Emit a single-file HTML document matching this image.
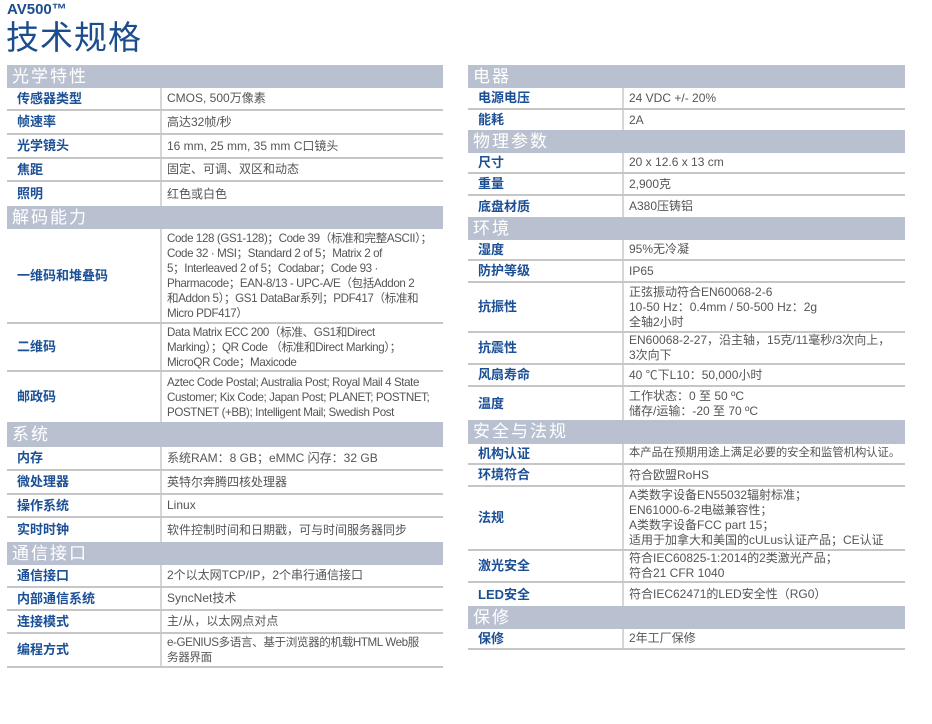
<!DOCTYPE html>
<html><head><meta charset="utf-8"><style>
*{margin:0;padding:0;box-sizing:border-box}
body{width:932px;height:724px;background:#fff;position:relative;font-family:"Liberation Sans","Noto Sans CJK SC",sans-serif;overflow:hidden}
.t1{position:absolute;left:7px;top:1px;font-size:15px;font-weight:bold;color:#1b4d8c}
.t2{position:absolute;left:6px;top:18px;font-size:33px;color:#1b4d8c;letter-spacing:1px;line-height:40px}
.tab{position:absolute}
.h{background:#b9c1d1;color:#fff;font-size:17px;padding-left:5px;display:flex;align-items:center;letter-spacing:2px;line-height:20px}
.r{display:flex;border-bottom:2px solid #c6c6c6}
.l{flex:0 0 auto;color:#1b4f96;font-weight:bold;font-size:13px;line-height:16px;display:flex;align-items:center;padding-left:10px;border-right:2px solid #d6d6d6}
.v{flex:1 1 auto;min-width:0;color:#555;font-size:12px;line-height:15px;display:flex;align-items:center;padding-left:5px;padding-right:0;white-space:nowrap}
.s{font-size:11.6px;letter-spacing:-0.4px}
#L{left:7px;top:65px;width:436px}
#L .l{width:155px}
#R{left:468px;top:65px;width:437px}
#R .l{width:156px}
</style></head><body>
<div class="t1">AV500™</div>
<div class="t2">技术规格</div>
<div class="tab" id="L">
<div class="h" style="height:23px">光学特性</div>
<div class="r" style="height:23px"><div class="l">传感器类型</div><div class="v">CMOS, 500万像素</div></div>
<div class="r" style="height:24px"><div class="l">帧速率</div><div class="v">高达32帧/秒</div></div>
<div class="r" style="height:24px"><div class="l">光学镜头</div><div class="v">16 mm, 25 mm, 35 mm C口镜头</div></div>
<div class="r" style="height:23px"><div class="l">焦距</div><div class="v">固定、可调、双区和动态</div></div>
<div class="r" style="height:24px;border-bottom:0"><div class="l">照明</div><div class="v">红色或白色</div></div>
<div class="h" style="height:23px">解码能力</div>
<div class="r" style="height:95px"><div class="l">一维码和堆叠码</div><div class="v s">Code 128 (GS1-128)；Code 39（标准和完整ASCII）；<br>Code 32 · MSI；Standard 2 of 5；Matrix 2 of<br>5；Interleaved 2 of 5；Codabar；Code 93 ·<br>Pharmacode；EAN-8/13 - UPC-A/E（包括Addon 2<br>和Addon 5）；GS1 DataBar系列；PDF417（标准和<br>Micro PDF417）</div></div>
<div class="r" style="height:48px"><div class="l">二维码</div><div class="v s">Data Matrix ECC 200（标准、GS1和Direct<br>Marking）；QR Code （标准和Direct Marking）；<br>MicroQR Code；Maxicode</div></div>
<div class="r" style="height:50px;border-bottom:0"><div class="l">邮政码</div><div class="v s">Aztec Code Postal; Australia Post; Royal Mail 4 State<br>Customer; Kix Code; Japan Post; PLANET; POSTNET;<br>POSTNET (+BB); Intelligent Mail; Swedish Post</div></div>
<div class="h" style="height:25px">系统</div>
<div class="r" style="height:24px"><div class="l">内存</div><div class="v">系统RAM：8 GB；eMMC 闪存：32 GB</div></div>
<div class="r" style="height:24px"><div class="l">微处理器</div><div class="v">英特尔奔腾四核处理器</div></div>
<div class="r" style="height:23px"><div class="l">操作系统</div><div class="v">Linux</div></div>
<div class="r" style="height:24px;border-bottom:0"><div class="l">实时时钟</div><div class="v">软件控制时间和日期戳，可与时间服务器同步</div></div>
<div class="h" style="height:23px">通信接口</div>
<div class="r" style="height:23px"><div class="l">通信接口</div><div class="v">2个以太网TCP/IP，2个串行通信接口</div></div>
<div class="r" style="height:23px"><div class="l">内部通信系统</div><div class="v">SyncNet技术</div></div>
<div class="r" style="height:23px"><div class="l">连接模式</div><div class="v">主/从，以太网点对点</div></div>
<div class="r" style="height:34px"><div class="l">编程方式</div><div class="v s">e-GENIUS多语言、基于浏览器的机载HTML Web服<br>务器界面</div></div>
</div>
<div class="tab" id="R">
<div class="h" style="height:23px">电器</div>
<div class="r" style="height:22px"><div class="l">电源电压</div><div class="v">24 VDC +/- 20%</div></div>
<div class="r" style="height:20px;border-bottom:0"><div class="l">能耗</div><div class="v">2A</div></div>
<div class="h" style="height:23px">物理参数</div>
<div class="r" style="height:21px"><div class="l">尺寸</div><div class="v">20 x 12.6 x 13 cm</div></div>
<div class="r" style="height:22px"><div class="l">重量</div><div class="v">2,900克</div></div>
<div class="r" style="height:21px;border-bottom:0"><div class="l">底盘材质</div><div class="v">A380压铸铝</div></div>
<div class="h" style="height:23px">环境</div>
<div class="r" style="height:21px"><div class="l">湿度</div><div class="v">95%无冷凝</div></div>
<div class="r" style="height:22px"><div class="l">防护等级</div><div class="v">IP65</div></div>
<div class="r" style="height:50px"><div class="l">抗振性</div><div class="v">正弦振动符合EN60068-2-6<br>10-50 Hz：0.4mm / 50-500 Hz：2g<br>全轴2小时</div></div>
<div class="r" style="height:32px"><div class="l">抗震性</div><div class="v">EN60068-2-27，沿主轴，15克/11毫秒/3次向上，<br>3次向下</div></div>
<div class="r" style="height:22px"><div class="l">风扇寿命</div><div class="v">40 ℃下L10：50,000小时</div></div>
<div class="r" style="height:33px;border-bottom:0"><div class="l">温度</div><div class="v">工作状态：0 至 50 ºC<br>储存/运输：-20 至 70 ºC</div></div>
<div class="h" style="height:24px">安全与法规</div>
<div class="r" style="height:21px"><div class="l">机构认证</div><div class="v" style="font-size:11.3px">本产品在预期用途上满足必要的安全和监管机构认证。</div></div>
<div class="r" style="height:22px"><div class="l">环境符合</div><div class="v">符合欧盟RoHS</div></div>
<div class="r" style="height:64px"><div class="l">法规</div><div class="v">A类数字设备EN55032辐射标准；<br>EN61000-6-2电磁兼容性；<br>A类数字设备FCC part 15；<br>适用于加拿大和美国的cULus认证产品；CE认证</div></div>
<div class="r" style="height:32px"><div class="l">激光安全</div><div class="v">符合IEC60825-1:2014的2类激光产品；<br>符合21 CFR 1040</div></div>
<div class="r" style="height:23px;border-bottom:0"><div class="l">LED安全</div><div class="v">符合IEC62471的LED安全性（RG0）</div></div>
<div class="h" style="height:23px">保修</div>
<div class="r" style="height:21px"><div class="l">保修</div><div class="v">2年工厂保修</div></div>
</div>
</body></html>
